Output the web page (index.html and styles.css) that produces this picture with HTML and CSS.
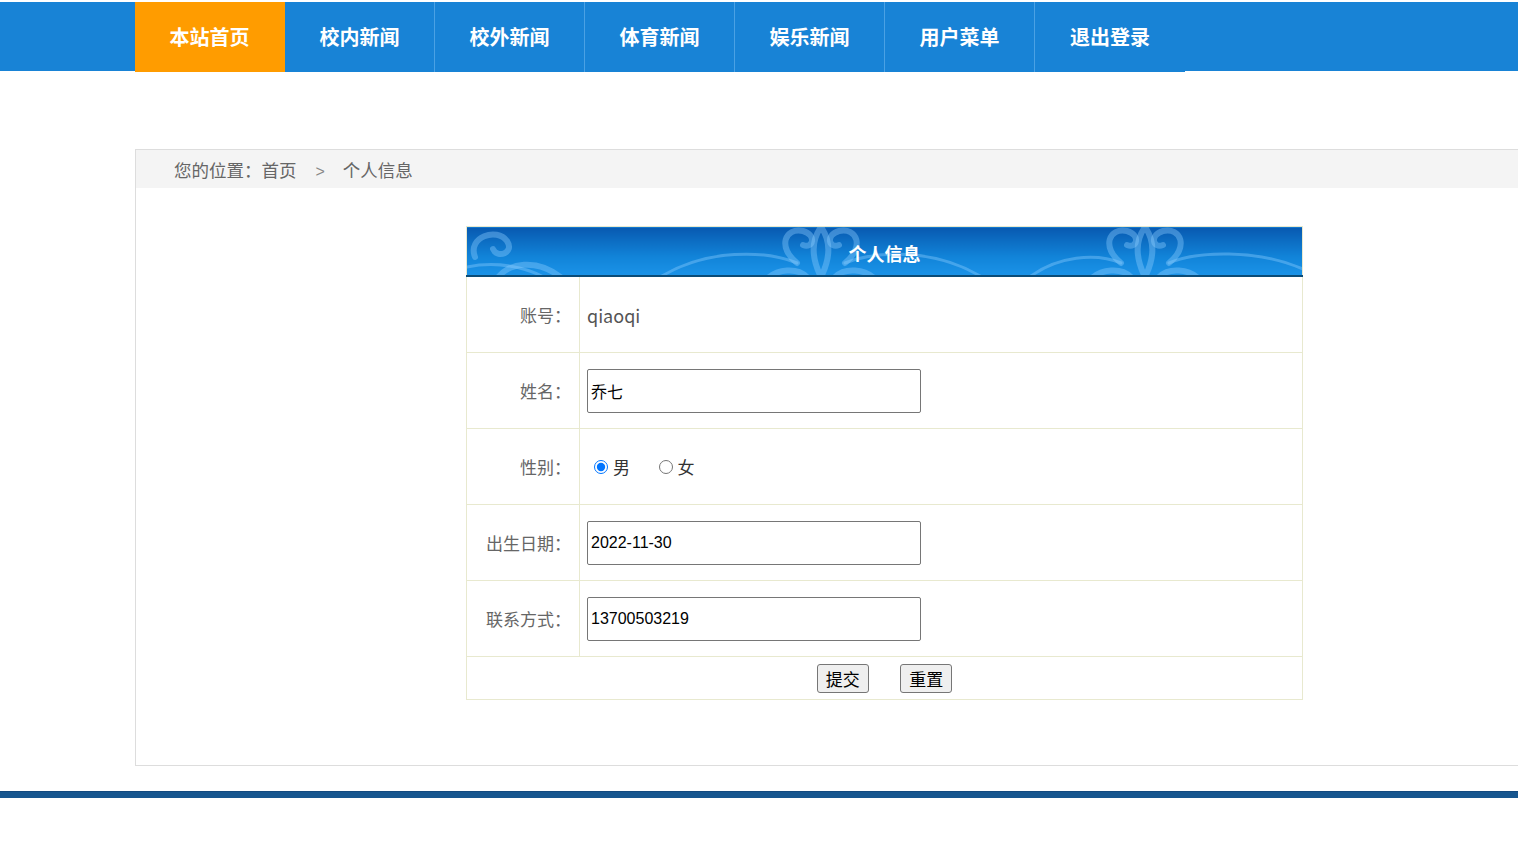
FILE: index.html
```html
<!DOCTYPE html>
<html lang="zh-CN">
<head>
    <meta charset="UTF-8">
    <meta name="viewport" content="width=device-width, initial-scale=1.0">
    <title>个人信息</title>
    <link rel="stylesheet" href="styles.css">
</head>
<body>
    <div class="nav">
        <ul>
            <li class="active"><a href="#">本站首页</a></li>
            <li><a href="#">校内新闻</a></li>
            <li><a href="#">校外新闻</a></li>
            <li><a href="#">体育新闻</a></li>
            <li><a href="#">娱乐新闻</a></li>
            <li><a href="#">用户菜单</a></li>
            <li><a href="#">退出登录</a></li>
        </ul>
    </div>

    <div class="main">
        <div class="crumb">您的位置：<a href="#">首页</a><span class="sep">&gt;</span>个人信息</div>

        <form class="info-form">
            <table class="info-table">
                <tr>
                    <th colspan="2" class="title">
                        <svg class="ornament" width="836" height="50" viewBox="0 0 836 50" preserveAspectRatio="none">
                            <g fill="none" stroke="rgba(140,205,255,0.4)" stroke-width="6" stroke-linecap="round">
                                <!-- left motif -->
                                <path d="M8 30 C0 10 30 0 40 14 C48 26 30 32 26 22"/>
                                <path d="M30 52 C40 36 70 30 96 52"/>
                                <path d="M0 40 C30 34 60 40 80 52" stroke-width="3"/>
                                <!-- center motif -->
                                <path d="M330 36 C310 20 318 0 336 4 C350 8 346 22 336 18"/>
                                <path d="M378 36 C398 20 390 0 372 4 C358 8 362 22 372 18"/>
                                <path d="M354 0 C344 14 344 30 354 50 C364 30 364 14 354 0"/>
                                <path d="M190 52 C240 20 300 24 330 36" stroke-width="3"/>
                                <path d="M518 52 C468 20 408 24 378 36" stroke-width="3"/>
                                <path d="M300 52 C310 42 330 40 340 50"/>
                                <path d="M408 52 C398 42 378 40 368 50"/>
                                <!-- right motif -->
                                <path d="M654 36 C634 20 642 0 660 4 C674 8 670 22 660 18"/>
                                <path d="M702 36 C722 20 714 0 696 4 C682 8 686 22 696 18"/>
                                <path d="M678 0 C668 14 668 30 678 50 C688 30 688 14 678 0"/>
                                <path d="M560 52 C590 28 630 26 654 36" stroke-width="3"/>
                                <path d="M836 42 C790 22 730 24 702 36" stroke-width="3"/>
                                <path d="M624 52 C634 42 654 40 664 50"/>
                                <path d="M732 52 C722 42 702 40 692 50"/>
                            </g>
                        </svg>
                        <span>个人信息</span>
                    </th>
                </tr>
                <tr>
                    <td class="label">账号：</td>
                    <td class="value"><span class="account">qiaoqi</span></td>
                </tr>
                <tr>
                    <td class="label">姓名：</td>
                    <td class="value"><input type="text" class="text-input" value="乔七"></td>
                </tr>
                <tr>
                    <td class="label">性别：</td>
                    <td class="value">
                        <label class="radio"><input type="radio" name="sex" checked>男</label>
                        <label class="radio"><input type="radio" name="sex">女</label>
                    </td>
                </tr>
                <tr>
                    <td class="label">出生日期：</td>
                    <td class="value"><input type="text" class="text-input" value="2022-11-30"></td>
                </tr>
                <tr>
                    <td class="label">联系方式：</td>
                    <td class="value"><input type="text" class="text-input" value="13700503219"></td>
                </tr>
                <tr>
                    <td colspan="2" class="actions">
                        <button type="button">提交</button>
                        <button type="reset">重置</button>
                    </td>
                </tr>
            </table>
        </form>
    </div>

    <div class="footer-line"></div>
</body>
</html>
```

FILE: styles.css
```css
body {
    margin: 0;
    padding-top: 2px;
    font-family: "Microsoft YaHei", "Noto Sans CJK SC", sans-serif;
    background-color: #fff;
    overflow-x: hidden;
}
a {
    text-decoration: none;
    color: inherit;
}
.nav {
    height: 69px;
    background-color: #1883d6;
}
.nav ul {
    list-style: none;
    margin: 0;
    padding: 0 0 0 135px;
    display: flex;
}
.nav li {
    box-sizing: border-box;
    width: 150px;
    height: 70px;
    border-right: 1px solid #4aa1e4;
    background-color: #1883d6;
    text-align: center;
}
.nav li.active {
    background-color: #ff9c00;
    border-right-color: #ff9c00;
}
.nav li:last-child {
    border-right: none;
}
.nav li a {
    display: block;
    line-height: 70px;
    font-size: 20px;
    font-weight: bold;
    color: #fff;
}
.main {
    box-sizing: border-box;
    width: 1498px;
    height: 617px;
    margin: 78px 0 0 135px;
    border: 1px solid #ddd;
}
.crumb {
    height: 38px;
    line-height: 40px;
    padding-left: 38px;
    background-color: #f4f4f4;
    font-size: 17.5px;
    color: #666;
}
.crumb .sep {
    margin: 0 18px 0 19px;
    font-family: "Liberation Sans", sans-serif;
    font-size: 16px;
    color: #888;
}
.info-form {
    margin: 38px 0 0 330px;
}
.info-table {
    width: 837px;
    border-collapse: collapse;
    border: 1px solid #e8e9cf;
}
.info-table td {
    border: 1px solid #e8e9cf;
    height: 75px;
    padding: 0;
}
.info-table .title {
    position: relative;
    height: 48px;
    padding: 0;
    background: linear-gradient(#0859b0, #1183d8 60%, #1b93e8);
    border-bottom: 2px solid #0b4c78;
    overflow: hidden;
}
.ornament {
    position: absolute;
    left: 0;
    top: 0;
}
.title span {
    position: relative;
    top: 2px;
    font-size: 18px;
    font-weight: bold;
    color: #fff;
}
.info-table td.label {
    width: 104px;
    padding-right: 8px;
    text-align: right;
    font-size: 17px;
    color: #666;
}
.info-table td.value {
    padding-left: 7px;
}
.account {
    font-size: 18px;
    color: #555;
}
.text-input {
    box-sizing: border-box;
    width: 334px;
    height: 44px;
    padding: 0 3px;
    border: 1px solid #767676;
    border-radius: 2px;
    font-family: "Liberation Sans", "Noto Sans CJK SC", sans-serif;
    font-size: 16px;
    color: #000;
}
.radio {
    font-size: 17px;
    color: #333;
    margin-right: 18px;
}
.radio input {
    width: 14px;
    height: 14px;
    margin: 0 5px 0 7px;
}
.info-table td.actions {
    height: 42px;
    text-align: center;
}
.actions button {
    font-family: "Noto Sans CJK SC", sans-serif;
    font-size: 17px;
    height: 29px;
    padding: 0 8px;
    margin: 0 14px;
    border: 1px solid #767676;
    border-radius: 3px;
    background-color: #efefef;
    color: #000;
}
.footer-line {
    height: 6px;
    margin-top: 25px;
    background-color: #17568f;
    border-top: 1px solid #12497f;
}
```
